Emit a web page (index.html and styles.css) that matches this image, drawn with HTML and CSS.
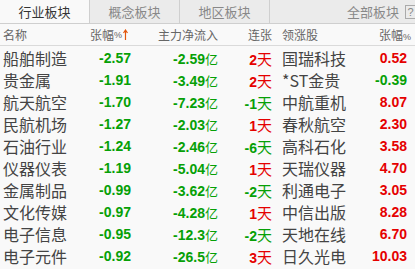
FILE: index.html
```html
<!DOCTYPE html>
<html lang="zh-CN">
<head>
<meta charset="utf-8">
<title>行业板块</title>
<link rel="stylesheet" href="styles.css">
</head>
<body>
<div class="panel">
  <div class="tabs">
    <div class="tab active">行业板块</div>
    <div class="tab">概念板块</div>
    <div class="tab">地区板块</div>
    <div class="tab-rest">
      <span class="all">全部板块</span>
      <span class="help">?</span>
    </div>
  </div>
  <div class="row head">
    <div class="c-name">名称</div>
    <div class="c-chg">张幅<span class="pct">%</span><svg class="arrow" width="5" height="11" viewBox="0 0 5 11"><path d="M2.5 1 V11 M0.5 4 L2.5 1 L4.5 4" stroke="#e2560c" stroke-width="1.2" fill="none"/></svg></div>
    <div class="c-flow">主力净流入</div>
    <div class="c-days">连张</div>
    <div class="c-lead">领涨股</div>
    <div class="c-lchg">张幅<span class="pct">%</span></div>
  </div>
  <div class="rows">
    <div class="row"><div class="c-name">船舶制造</div><div class="c-chg num g">-2.57</div><div class="c-flow num g">-2.59<span class="u">亿</span></div><div class="c-days num r">2<span class="u d">天</span></div><div class="c-lead">国瑞科技</div><div class="c-lchg num r">0.52</div></div>
    <div class="row"><div class="c-name">贵金属</div><div class="c-chg num g">-1.91</div><div class="c-flow num g">-3.49<span class="u">亿</span></div><div class="c-days num r">2<span class="u d">天</span></div><div class="c-lead">*ST金贵</div><div class="c-lchg num g">-0.39</div></div>
    <div class="row"><div class="c-name">航天航空</div><div class="c-chg num g">-1.70</div><div class="c-flow num g">-7.23<span class="u">亿</span></div><div class="c-days num g">-1<span class="u d">天</span></div><div class="c-lead">中航重机</div><div class="c-lchg num r">8.07</div></div>
    <div class="row"><div class="c-name">民航机场</div><div class="c-chg num g">-1.27</div><div class="c-flow num g">-2.03<span class="u">亿</span></div><div class="c-days num r">1<span class="u d">天</span></div><div class="c-lead">春秋航空</div><div class="c-lchg num r">2.30</div></div>
    <div class="row"><div class="c-name">石油行业</div><div class="c-chg num g">-1.24</div><div class="c-flow num g">-2.46<span class="u">亿</span></div><div class="c-days num g">-6<span class="u d">天</span></div><div class="c-lead">高科石化</div><div class="c-lchg num r">3.58</div></div>
    <div class="row"><div class="c-name">仪器仪表</div><div class="c-chg num g">-1.19</div><div class="c-flow num g">-5.04<span class="u">亿</span></div><div class="c-days num r">1<span class="u d">天</span></div><div class="c-lead">天瑞仪器</div><div class="c-lchg num r">4.70</div></div>
    <div class="row"><div class="c-name">金属制品</div><div class="c-chg num g">-0.99</div><div class="c-flow num g">-3.62<span class="u">亿</span></div><div class="c-days num g">-2<span class="u d">天</span></div><div class="c-lead">利通电子</div><div class="c-lchg num r">3.05</div></div>
    <div class="row"><div class="c-name">文化传媒</div><div class="c-chg num g">-0.97</div><div class="c-flow num g">-4.28<span class="u">亿</span></div><div class="c-days num r">1<span class="u d">天</span></div><div class="c-lead">中信出版</div><div class="c-lchg num r">8.28</div></div>
    <div class="row"><div class="c-name">电子信息</div><div class="c-chg num g">-0.95</div><div class="c-flow num g">-12.3<span class="u">亿</span></div><div class="c-days num g">-2<span class="u d">天</span></div><div class="c-lead">天地在线</div><div class="c-lchg num r">6.70</div></div>
    <div class="row"><div class="c-name">电子元件</div><div class="c-chg num g">-0.92</div><div class="c-flow num g">-26.5<span class="u">亿</span></div><div class="c-days num r">3<span class="u d">天</span></div><div class="c-lead">日久光电</div><div class="c-lchg num r">10.03</div></div>
  </div>
</div>
</body>
</html>
```
FILE: styles.css
```css
html, body {
  margin: 0;
  padding: 0;
}
body {
  width: 415px;
  height: 269px;
  overflow: hidden;
  background: #f9f9f9;
  font-family: "Noto Sans CJK SC", "Liberation Sans", sans-serif;
  color: #444;
}
.panel {
  display: flex;
  flex-direction: column;
}
.tabs {
  display: flex;
  height: 23px;
  background: #ebebeb;
  border-bottom: 1px solid #cfcfcf;
}
.tab {
  width: 89px;
  border-right: 1px solid #cfcfcf;
  display: flex;
  align-items: center;
  justify-content: center;
  font-size: 13px;
  color: #888;
}
.tab.active {
  background: #f9f9f9;
  color: #333;
}
.tab-rest {
  flex: 1;
  display: flex;
  align-items: center;
  justify-content: flex-end;
  gap: 6px;
}
.all {
  font-size: 13px;
  color: #888;
}
.help {
  width: 10px;
  height: 14px;
  border: 1px solid #aaa;
  border-right: none;
  box-sizing: border-box;
  font-family: "Liberation Sans", sans-serif;
  font-size: 11px;
  color: #888;
  display: flex;
  align-items: center;
  justify-content: center;
}
.row {
  display: grid;
  grid-template-columns: 87px 41px 87px 54px 75px 60px;
  padding-left: 3px;
  height: 22px;
  align-items: center;
  white-space: nowrap;
}
.row.head {
  height: 21px;
  border-bottom: 1px solid #dadada;
  font-size: 12px;
  color: #666;
}
.rows .row {
  font-size: 16px;
}
.c-chg, .c-flow, .c-days, .c-lchg {
  text-align: right;
}
.c-lead {
  padding-left: 10px;
}
.head .c-chg {
  display: flex;
  justify-content: flex-end;
  align-items: center;
  padding-right: 3px;
}
.head .c-lchg {
  margin-right: -4px;
}
.pct {
  font-family: "Liberation Sans", sans-serif;
  font-size: 9px;
}
.arrow {
  margin-left: 1px;
}
.num {
  font-family: "Liberation Sans", sans-serif;
  font-weight: bold;
  font-size: 14px;
}
.u {
  font-family: "Noto Sans CJK SC", sans-serif;
  font-weight: normal;
  font-size: 13px;
}
.u.d {
  font-size: 15px;
}
.g {
  color: #06a006;
}
.r {
  color: #e50000;
}
```
